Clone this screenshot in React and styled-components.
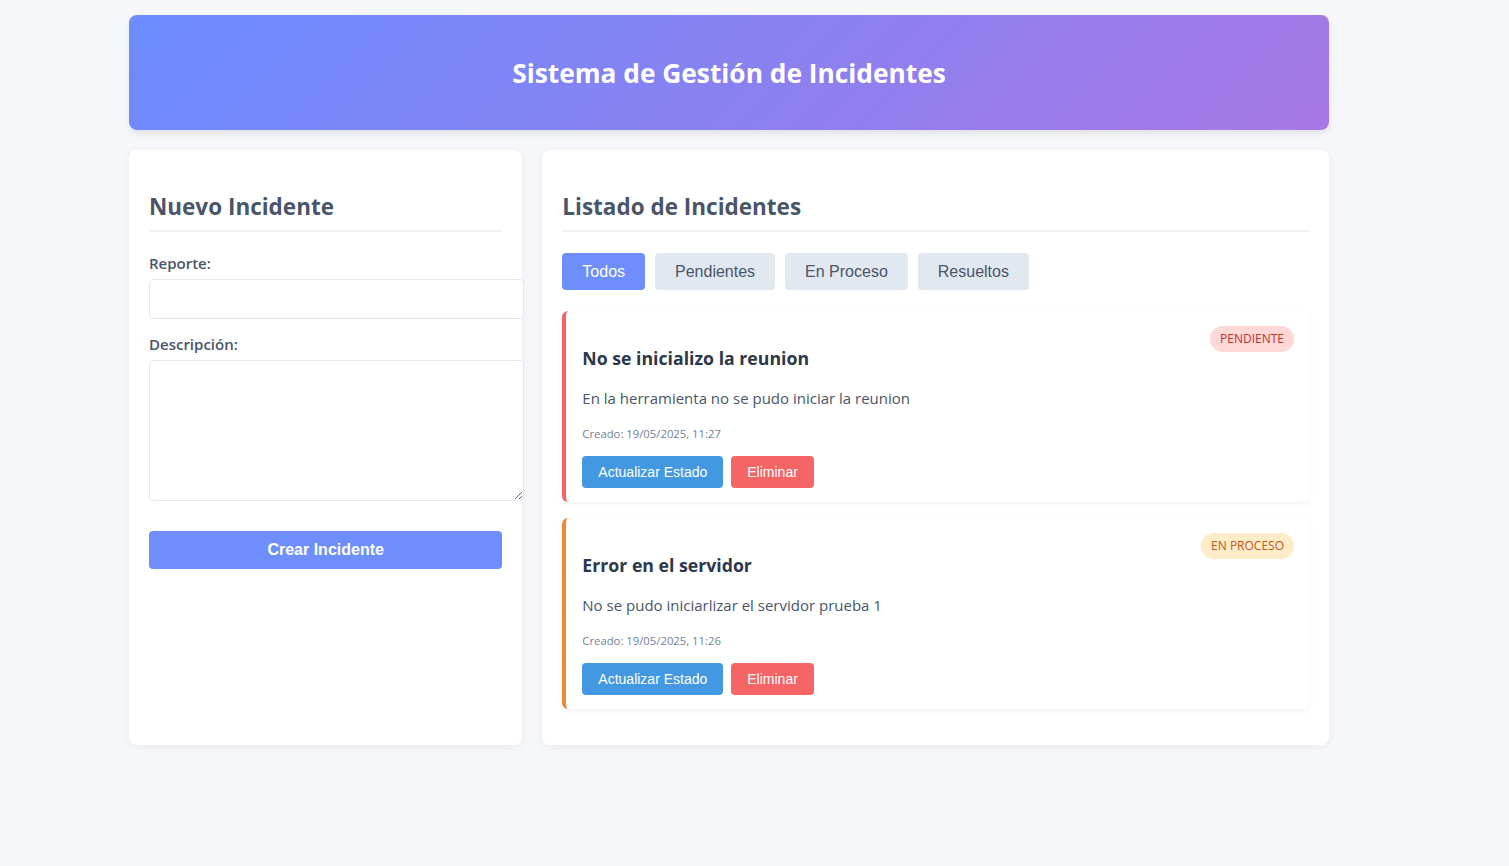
import React, { useState } from "react";
import styled, { createGlobalStyle } from "styled-components";

const GlobalStyle = createGlobalStyle`
  * { box-sizing: content-box; }
  html, body { margin: 0; padding: 0; }
  body {
    background: #f5f7fa;
    font-family: "Open Sans", "Noto Sans", sans-serif;
    color: #2d3748;
  }
`;

const Page = styled.div`
  width: 1200px;
  padding: 15px 0 40px 129px;
`;

const Header = styled.header`
  height: 115px;
  display: flex;
  align-items: center;
  justify-content: center;
  border-radius: 8px;
  background: linear-gradient(135deg, #6b8cff 0%, #a777e3 100%);
  box-shadow: 0 4px 6px rgba(0, 0, 0, 0.08);
  margin-bottom: 20px;
`;

const HeaderTitle = styled.h1`
  margin: 0;
  color: #ffffff;
  font-size: 26.3px;
  font-weight: 700;
`;

const Grid = styled.div`
  display: grid;
  grid-template-columns: 1fr 2fr;
  gap: 20px;
`;

const Panel = styled.section`
  background: #ffffff;
  border-radius: 8px;
  padding: 20px;
  box-shadow: 0 2px 10px rgba(0, 0, 0, 0.05);
`;

const PanelTitle = styled.h2`
  margin: 22px 0 21px;
  padding-bottom: 8px;
  border-bottom: 2px solid #edf2f7;
  font-size: 22.5px;
  font-weight: 700;
  line-height: 30px;
  color: #4a5568;
`;

const FormGroup = styled.div`
  margin-bottom: 15px;
`;

const Label = styled.label`
  display: block;
  margin-bottom: 5px;
  font-size: 15px;
  font-weight: 600;
  line-height: 21px;
  color: #4a5568;
`;

const Input = styled.input`
  display: block;
  width: 100%;
  padding: 10px;
  border: 1px solid #e2e8f0;
  border-radius: 4px;
  font-size: 16px;
  line-height: 18px;
  height: 18px;
  font-family: inherit;
  outline: none;
`;

const TextArea = styled.textarea`
  display: block;
  width: 100%;
  height: 119px;
  padding: 10px;
  border: 1px solid #e2e8f0;
  border-radius: 4px;
  font-size: 16px;
  font-family: inherit;
  outline: none;
`;

const SubmitButton = styled.button`
  display: block;
  box-sizing: border-box;
  width: 100%;
  height: 38px;
  margin-top: 30px;
  border: none;
  border-radius: 4px;
  background: #6e8ffb;
  color: #ffffff;
  font-family: "Liberation Sans", Arial, sans-serif;
  font-size: 16px;
  font-weight: 700;
  cursor: pointer;
`;

const Filters = styled.div`
  display: flex;
  gap: 10px;
  margin-bottom: 21px;
`;

const FilterButton = styled.button`
  height: 37px;
  padding: 0 20px;
  border: none;
  border-radius: 4px;
  background: ${(p) => (p.$active ? "#6e8ffb" : "#e2e8f0")};
  color: ${(p) => (p.$active ? "#ffffff" : "#4a5568")};
  font-family: "Liberation Sans", Arial, sans-serif;
  font-size: 16px;
  cursor: pointer;
`;

const Card = styled.article`
  border-left: 4px solid ${(p) => p.$accent};
  border-radius: 6px;
  background: #ffffff;
  padding: 15px 15px 14px 16px;
  margin-bottom: 16px;
  box-shadow: 0 2px 6px rgba(0, 0, 0, 0.06);
`;

const CardHeader = styled.div`
  display: flex;
  justify-content: space-between;
  align-items: flex-start;
`;

const CardTitle = styled.h3`
  margin: 20px 0 0;
  font-size: 17.7px;
  line-height: 24px;
  font-weight: 700;
  color: #2d3748;
`;

const Badge = styled.span`
  padding: 5px 10px;
  border-radius: 13px;
  font-size: 12px;
  line-height: 16px;
  background: ${(p) => p.$bg};
  color: ${(p) => p.$fg};
`;

const Description = styled.p`
  margin: 17px 0 0;
  font-size: 15px;
  line-height: 22px;
  color: #4a5568;
`;

const Meta = styled.p`
  margin: 17px 0 0;
  font-size: 11.3px;
  line-height: 16px;
  color: #718096;
`;

const Actions = styled.div`
  display: flex;
  gap: 8px;
  margin-top: 14px;
`;

const ActionButton = styled.button`
  height: 32px;
  padding: 0 16px;
  border: none;
  border-radius: 4px;
  background: ${(p) => p.$bg};
  color: #ffffff;
  font-family: "Liberation Sans", Arial, sans-serif;
  font-size: 14px;
  cursor: pointer;
`;

const STATUS = {
  pendiente: { label: "PENDIENTE", bg: "#fed7d7", fg: "#c53030", accent: "#f56565" },
  proceso: { label: "EN PROCESO", bg: "#feebc8", fg: "#c05621", accent: "#ed8936" },
};

const incidents = [
  {
    id: 1,
    title: "No se inicializo la reunion",
    description: "En la herramienta no se pudo iniciar la reunion",
    created: "19/05/2025, 11:27",
    status: "pendiente",
  },
  {
    id: 2,
    title: "Error en el servidor",
    description: "No se pudo iniciarlizar el servidor prueba 1",
    created: "19/05/2025, 11:26",
    status: "proceso",
  },
];

const filters = ["Todos", "Pendientes", "En Proceso", "Resueltos"];

export default function App() {
  const [active, setActive] = useState("Todos");
  return (
    <>
      <GlobalStyle />
      <Page>
        <Header>
          <HeaderTitle>Sistema de Gestión de Incidentes</HeaderTitle>
        </Header>
        <Grid>
          <Panel>
            <PanelTitle>Nuevo Incidente</PanelTitle>
            <FormGroup>
              <Label htmlFor="reporte">Reporte:</Label>
              <Input id="reporte" type="text" />
            </FormGroup>
            <FormGroup>
              <Label htmlFor="descripcion">Descripción:</Label>
              <TextArea id="descripcion" />
            </FormGroup>
            <SubmitButton>Crear Incidente</SubmitButton>
          </Panel>
          <Panel>
            <PanelTitle>Listado de Incidentes</PanelTitle>
            <Filters>
              {filters.map((f) => (
                <FilterButton key={f} $active={f === active} onClick={() => setActive(f)}>
                  {f}
                </FilterButton>
              ))}
            </Filters>
            {incidents.map((inc) => {
              const s = STATUS[inc.status];
              return (
                <Card key={inc.id} $accent={s.accent}>
                  <CardHeader>
                    <CardTitle>{inc.title}</CardTitle>
                    <Badge $bg={s.bg} $fg={s.fg}>{s.label}</Badge>
                  </CardHeader>
                  <Description>{inc.description}</Description>
                  <Meta>Creado: {inc.created}</Meta>
                  <Actions>
                    <ActionButton $bg="#4299e1">Actualizar Estado</ActionButton>
                    <ActionButton $bg="#f56565">Eliminar</ActionButton>
                  </Actions>
                </Card>
              );
            })}
          </Panel>
        </Grid>
      </Page>
    </>
  );
}
